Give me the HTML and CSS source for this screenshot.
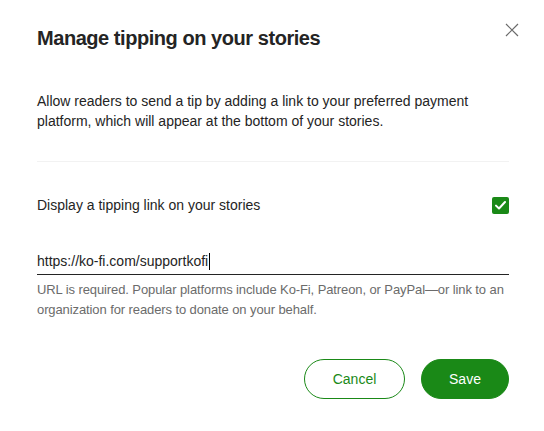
FILE: index.html
```html
<!DOCTYPE html>
<html>
<head>
<meta charset="utf-8">
<link rel="stylesheet" href="styles.css">
</head>
<body>
<div class="modal">
  <button class="close" aria-label="Close">
    <svg width="14" height="14" viewBox="0 0 14 14"><path d="M1 1L13 13M13 1L1 13" stroke="#6b6b6b" stroke-width="1.2" fill="none"/></svg>
  </button>
  <h1 class="title">Manage tipping on your stories</h1>
  <p class="intro">Allow readers to send a tip by adding a link to your preferred payment platform, which will appear at the bottom of your stories.</p>
  <hr class="divider">
  <div class="toggle-row">
    <span>Display a tipping link on your stories</span>
    <span class="check">
      <svg width="11" height="9" viewBox="0 0 11 9"><path d="M1 4.6L4 7.5L10 1" stroke="#fff" stroke-width="2" fill="none" stroke-linecap="round" stroke-linejoin="round"/></svg>
    </span>
  </div>
  <div class="field">
    <span class="value">https://ko-fi.com/supportkofi</span><span class="caret"></span>
  </div>
  <p class="help">URL is required. Popular platforms include Ko-Fi, Patreon, or PayPal—or link to an organization for readers to donate on your behalf.</p>
  <div class="actions">
    <button class="btn btn-outline">Cancel</button>
    <button class="btn btn-solid">Save</button>
  </div>
</div>
</body>
</html>
```
FILE: styles.css
```css
* { box-sizing: border-box; }
body {
  margin: 0;
  background: #fff;
  font-family: "Liberation Sans", Arial, sans-serif;
  color: #242424;
}
.modal {
  position: relative;
  width: 544px;
  height: 431px;
  padding: 26px 35px 0 37px;
}
.close {
  position: absolute;
  top: 23px;
  right: 25px;
  width: 14px;
  height: 14px;
  padding: 0;
  border: 0;
  background: none;
  display: block;
}
.close svg { display: block; }
.title {
  margin: 0;
  font-size: 20px;
  line-height: 24px;
  font-weight: 700;
  letter-spacing: -0.45px;
}
.intro {
  margin: 41px 0 0;
  font-size: 14px;
  line-height: 20px;
}
.divider {
  margin: 30px 0 0;
  border: 0;
  border-top: 1px solid #f2f2f2;
}
.toggle-row {
  margin-top: 33px;
  display: flex;
  align-items: center;
  justify-content: space-between;
  font-size: 14px;
  line-height: 20px;
}
.check {
  width: 17px;
  height: 17px;
  border-radius: 2px;
  background: #1a8917;
  display: flex;
  align-items: center;
  justify-content: center;
}
.check svg { display: block; }
.field {
  margin-top: 36px;
  display: flex;
  align-items: center;
  font-size: 14px;
  line-height: 20px;
  padding-bottom: 3px;
  border-bottom: 1px solid #242424;
}
.caret {
  width: 1px;
  height: 17px;
  background: #000;
  margin-left: 1px;
}
.help {
  margin: 5px 0 0;
  font-size: 13px;
  line-height: 20px;
  color: #6b6b6b;
  letter-spacing: -0.1px;
}
.actions {
  margin-top: 39px;
  display: flex;
  justify-content: flex-end;
  gap: 16px;
}
.btn {
  height: 40px;
  border-radius: 20px;
  font-family: inherit;
  font-size: 14px;
  padding: 0 20px;
}
.btn-outline {
  width: 101px;
  background: #fff;
  border: 1px solid #1a8917;
  color: #1a8917;
}
.btn-solid {
  width: 88px;
  background: #1a8917;
  border: 1px solid #1a8917;
  color: #fff;
}
```
